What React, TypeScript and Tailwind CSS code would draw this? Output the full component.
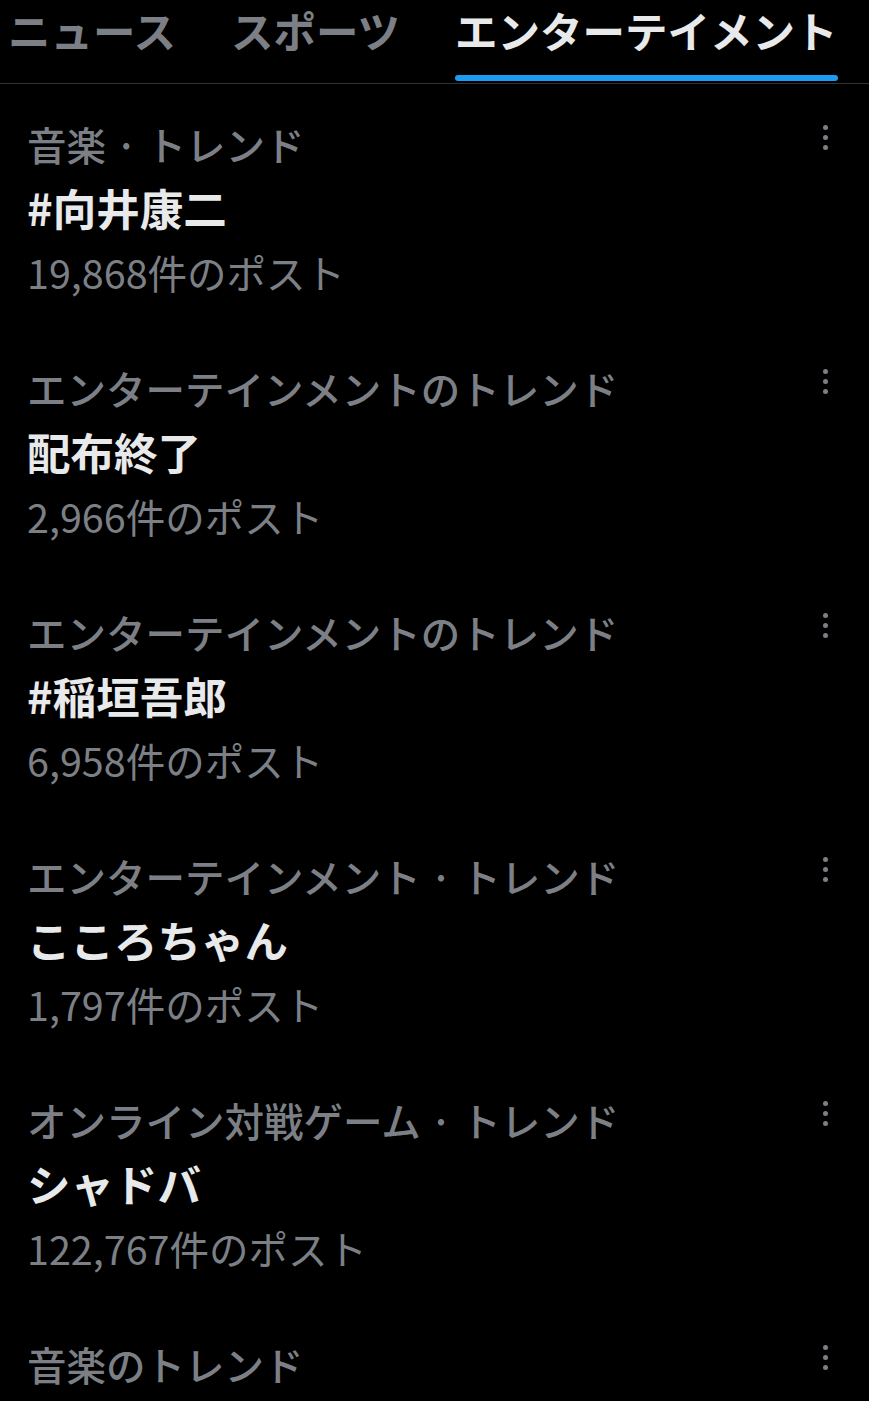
import React from "react";

const trends = [
  { cat: "音楽 · トレンド", title: "#向井康二", count: "19,868件のポスト" },
  { cat: "エンターテインメントのトレンド", title: "配布終了", count: "2,966件のポスト" },
  { cat: "エンターテインメントのトレンド", title: "#稲垣吾郎", count: "6,958件のポスト" },
  { cat: "エンターテインメント · トレンド", title: "こころちゃん", count: "1,797件のポスト" },
  { cat: "オンライン対戦ゲーム · トレンド", title: "シャドバ", count: "122,767件のポスト" },
  { cat: "音楽のトレンド", title: "", count: "" },
];

const tabs = [
  { label: "ニュース", active: false },
  { label: "スポーツ", active: false },
  { label: "エンターテイメント", active: true },
];

function Dots() {
  return (
    <div className="flex flex-col gap-[5px] mt-[13px] shrink-0">
      <span className="block w-[5px] h-[5px] rounded-full bg-[#7c8086]" />
      <span className="block w-[5px] h-[5px] rounded-full bg-[#7c8086]" />
      <span className="block w-[5px] h-[5px] rounded-full bg-[#7c8086]" />
    </div>
  );
}

export default function App() {
  return (
    <div
      className="w-[869px] h-[1401px] overflow-hidden bg-black"
      style={{ fontFamily: '"Noto Sans CJK JP", "Noto Sans", sans-serif' }}
    >
      <div className="h-[84px] border-b border-[#2f3336] flex items-start pl-[8px] gap-[55px]">
        {tabs.map((t) => (
          <div key={t.label} className="flex flex-col h-[83px]">
            <span
              className={
                "leading-[60px] text-[42.5px] font-bold whitespace-nowrap " +
                (t.active ? "text-[#e7e9ea]" : "text-[#7c8086]")
              }
            >
              {t.label}
            </span>
            {t.active ? (
              <div className="mt-[15px] h-[6px] rounded-full bg-[#1d9bf0]" />
            ) : null}
          </div>
        ))}
      </div>
      <div className="flex flex-col">
        {trends.map((t, i) => (
          <div key={i} className="flex justify-between pl-[27px] pr-[41px] pt-[28px] pb-[24px]">
            <div className="flex flex-col">
              <span className="leading-[64px] text-[39.5px] font-medium text-[#7c8086] whitespace-nowrap">
                {t.cat}
              </span>
              {t.title ? (
                <span className="leading-[64px] text-[43.5px] font-bold text-[#e7e9ea] whitespace-nowrap">
                  {t.title}
                </span>
              ) : null}
              {t.count ? (
                <span className="leading-[64px] text-[39.5px] text-[#7c8086] whitespace-nowrap">
                  {t.count}
                </span>
              ) : null}
            </div>
            <Dots />
          </div>
        ))}
      </div>
    </div>
  );
}
